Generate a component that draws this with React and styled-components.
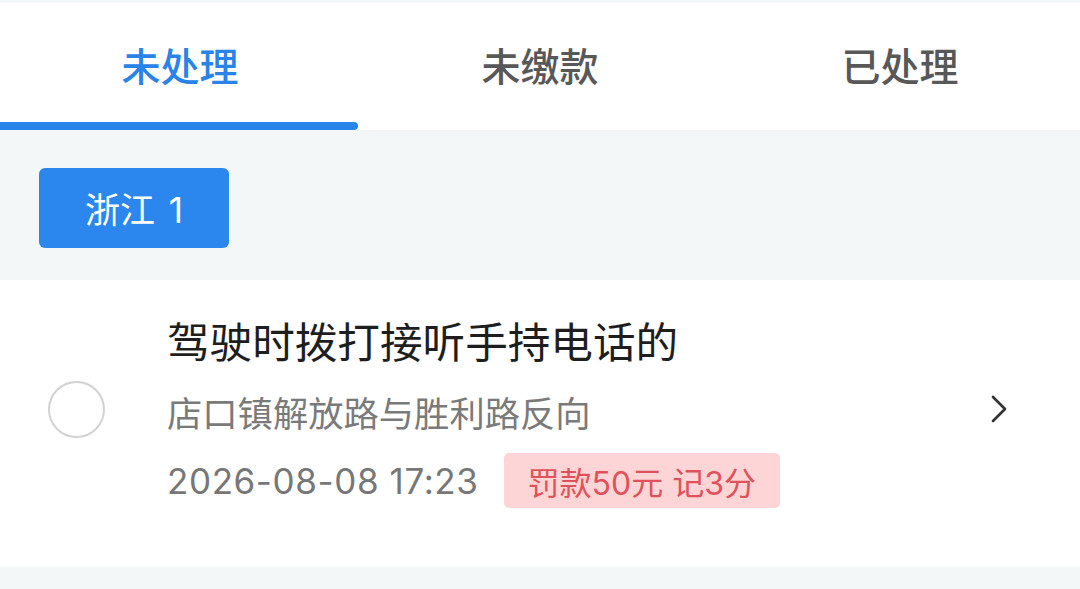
import React, { useState } from "react";
import styled, { createGlobalStyle } from "styled-components";

const GlobalStyle = createGlobalStyle`
  html, body {
    margin: 0;
    padding: 0;
    background: #f4f7f8;
    font-family: "Inter", "Noto Sans CJK SC", "Noto Sans", sans-serif;
  }
  * { box-sizing: border-box; }
`;

const Page = styled.div`
  width: 1080px;
  min-height: 589px;
  padding-top: 3px;
  background: #f4f7f8;
`;

const Tabs = styled.div`
  display: flex;
  height: 127px;
  background: #ffffff;
`;

const Tab = styled.div`
  position: relative;
  flex: 1;
  display: flex;
  align-items: center;
  justify-content: center;
  padding-bottom: 5px;
  font-size: 39px;
  font-weight: 500;
  color: ${(p) => (p.$active ? "#2a83e9" : "#585858")};
  cursor: pointer;

  &::after {
    content: "";
    display: ${(p) => (p.$active ? "block" : "none")};
    position: absolute;
    left: 0;
    right: 2px;
    bottom: 0;
    height: 8px;
    background: #2a83e9;
    border-radius: 0 4px 4px 0;
  }
`;

const FilterBar = styled.div`
  display: flex;
  align-items: center;
  height: 150px;
  padding: 0 39px;
`;

const RegionButton = styled.button`
  width: 190px;
  height: 80px;
  margin-top: 5px;
  padding: 0;
  border: none;
  border-radius: 6px;
  background: #2b86ee;
  color: #ffffff;
  font-family: inherit;
  font-size: 35px;
  word-spacing: 4px;
`;

const Card = styled.div`
  display: flex;
  align-items: center;
  padding: 41px 73px 59px 48px;
  background: #ffffff;
`;

const Radio = styled.div`
  flex: none;
  width: 57px;
  height: 57px;
  margin-bottom: 11px;
  border-radius: 50%;
  border: 2px solid #d2d2d2;
`;

const Content = styled.div`
  flex: 1;
  display: flex;
  flex-direction: column;
  margin-left: 62px;
`;

const Title = styled.div`
  font-size: 42.6px;
  line-height: 44px;
  color: #1e1e1e;
`;

const Address = styled.div`
  margin-top: 30px;
  font-size: 35.3px;
  line-height: 40px;
  color: #7a7a7a;
`;

const MetaRow = styled.div`
  display: flex;
  align-items: center;
  gap: 25px;
  height: 55px;
  margin-top: 18px;
`;

const DateText = styled.span`
  font-size: 35px;
  letter-spacing: 0.6px;
  color: #777777;
`;

const Penalty = styled.span`
  display: inline-flex;
  align-items: center;
  height: 55px;
  padding: 0 24px 0 24px;
  border-radius: 5px;
  background: #fdd5d6;
  color: #e0525b;
  font-size: 32px;
`;

const Chevron = styled.svg`
  flex: none;
  width: 16px;
  height: 28px;
  margin-bottom: 11px;
`;

const tabs = ["未处理", "未缴款", "已处理"];

export default function App() {
  const [active, setActive] = useState(0);
  return (
    <Page>
      <GlobalStyle />
      <Tabs>
        {tabs.map((t, i) => (
          <Tab key={t} $active={i === active} onClick={() => setActive(i)}>
            {t}
          </Tab>
        ))}
      </Tabs>
      <FilterBar>
        <RegionButton>浙江 1</RegionButton>
      </FilterBar>
      <Card>
        <Radio />
        <Content>
          <Title>驾驶时拨打接听手持电话的</Title>
          <Address>店口镇解放路与胜利路反向</Address>
          <MetaRow>
            <DateText>2026-08-08 17:23</DateText>
            <Penalty>罚款50元 记3分</Penalty>
          </MetaRow>
        </Content>
        <Chevron viewBox="0 0 16 28">
          <polyline
            points="2,2 14,14 2,26"
            fill="none"
            stroke="#333333"
            strokeWidth="2.7"
            strokeLinecap="round"
            strokeLinejoin="round"
          />
        </Chevron>
      </Card>
    </Page>
  );
}
